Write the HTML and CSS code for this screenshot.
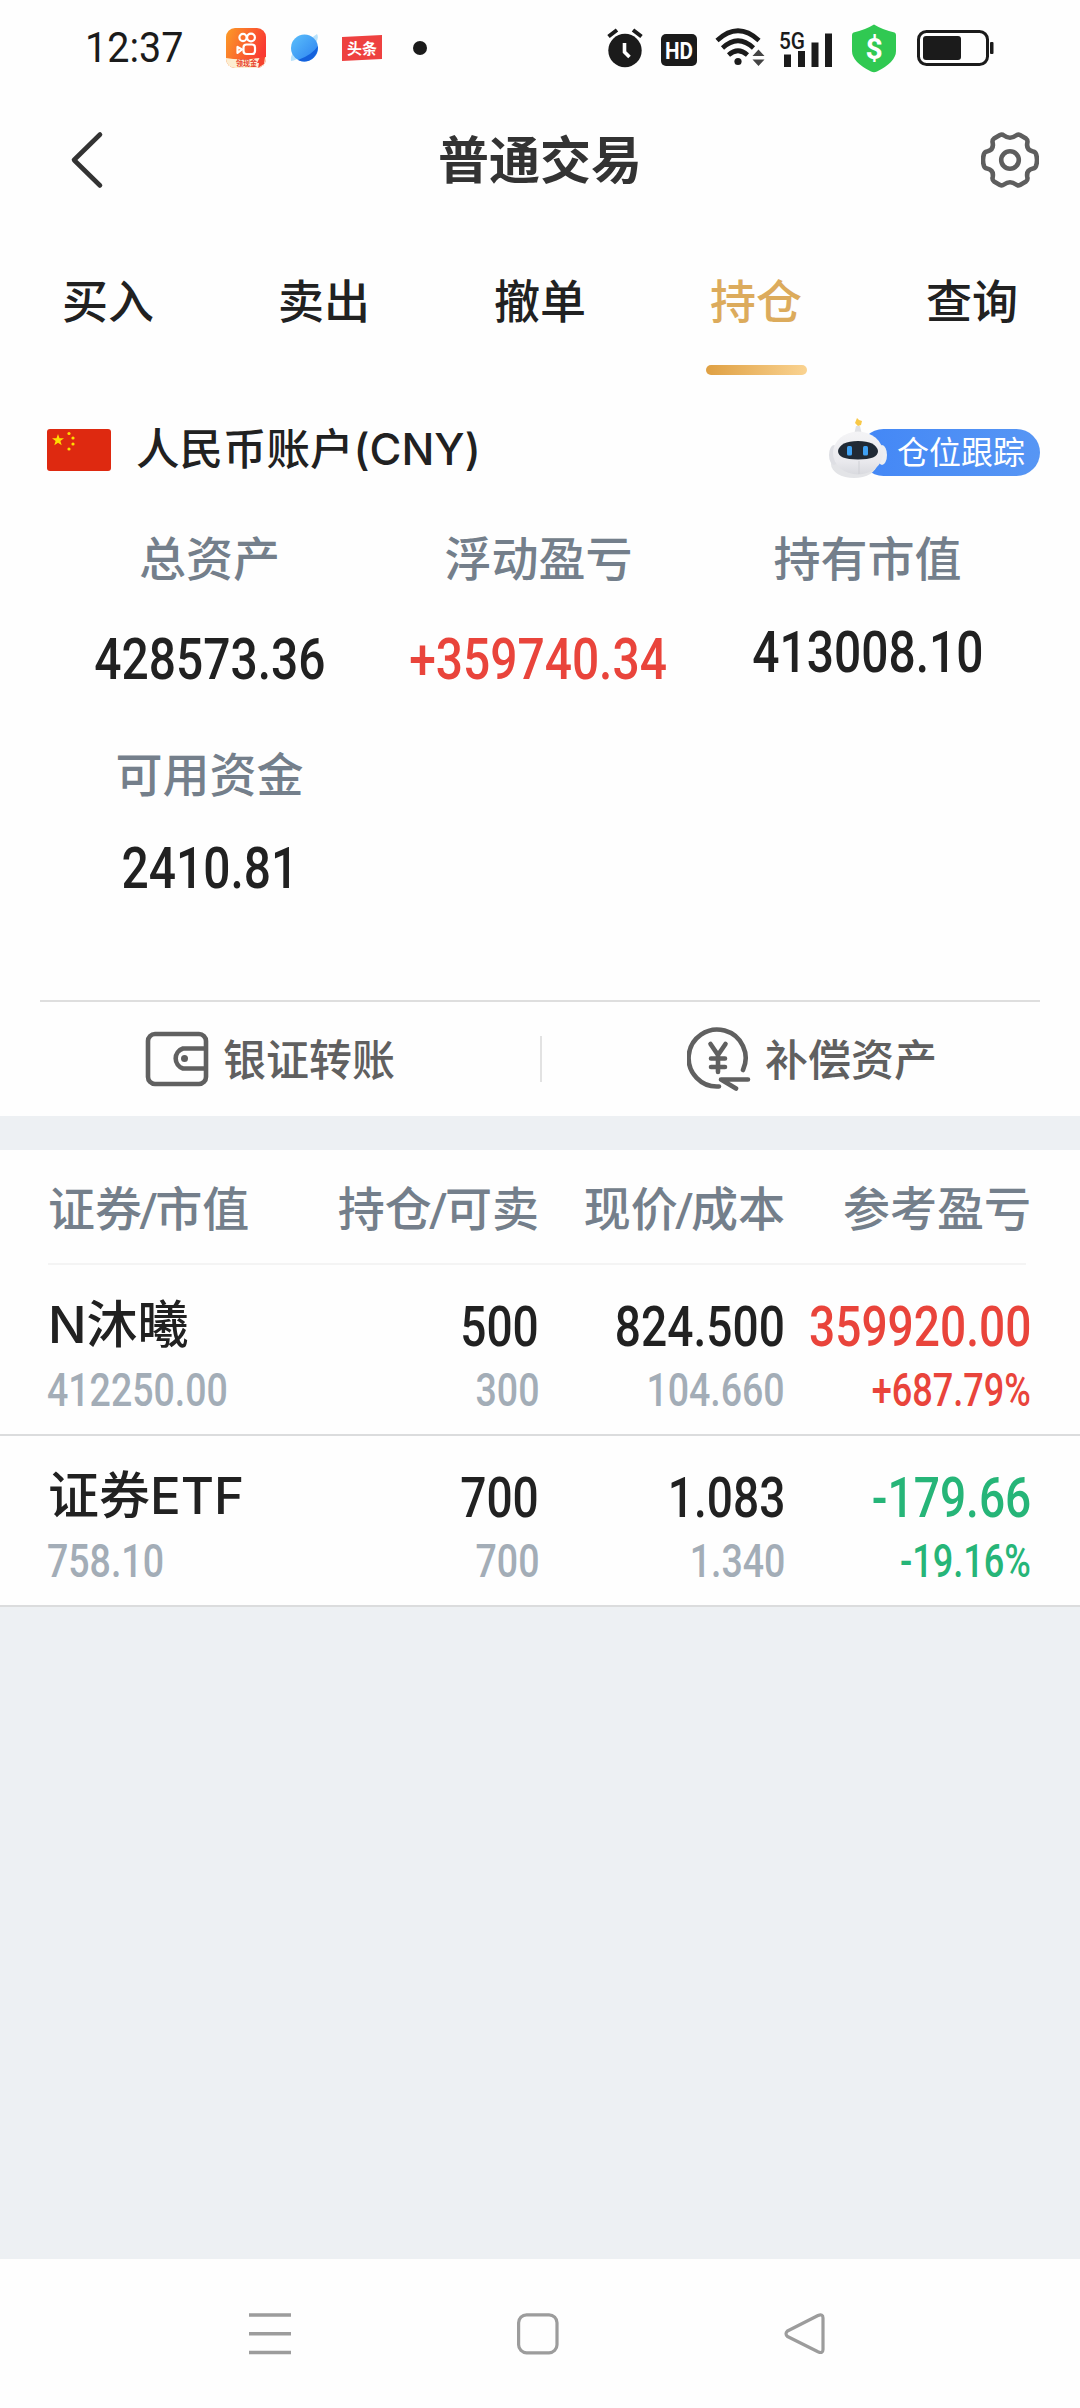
FILE: index.html
```html
<!DOCTYPE html>
<html lang="zh-CN">
<head>
<meta charset="utf-8">
<title>普通交易</title>
<link rel="stylesheet" href="styles.css">
</head>
<body>
<div class="screen">
  <div class="status">
    <span class="clock">12:37</span>
    <svg class="app-video" width="40" height="40" viewBox="0 0 40 40">
      <defs>
        <linearGradient id="gv" x1="0" y1="0" x2="1" y2="0.4"><stop offset="0" stop-color="#fb9c27"/><stop offset="1" stop-color="#fa3a32"/></linearGradient>
        <clipPath id="cv"><rect width="40" height="40" rx="9"/></clipPath>
      </defs>
      <g clip-path="url(#cv)">
        <rect width="40" height="40" fill="url(#gv)"/>
        <path d="M0 30Q16 33 40 29V40H0Z" fill="#fdeed2"/>
        <path d="M34 29l5 0-1 7-6 4 1-5-2 0Z" fill="#f5432f"/>
      </g>
      <g fill="none" stroke="#fff" stroke-width="2.2"><circle cx="17" cy="9.500" r="3.600"/><circle cx="25" cy="9.500" r="3.900"/><rect x="17.500" y="16.500" width="11.500" height="9.500" rx="3"/><path d="M16 21.500l-4.500-2.500v6Z" stroke-linejoin="round"/></g>
      <text x="10" y="38" textLength="21" lengthAdjust="spacingAndGlyphs" class="tiny">领现金</text>
    </svg>
    <svg class="app-globe" width="30" height="30" viewBox="0 0 30 30">
      <defs><linearGradient id="gg" x1="0" y1="0" x2="1" y2="1"><stop offset="0" stop-color="#5cc0fb"/><stop offset="1" stop-color="#2b80f0"/></linearGradient></defs>
      <path d="M27 1Q31 8 17 19Q6 28 1 28Q0 22 6 16Z" fill="#b9e2fb"/>
      <circle cx="14.500" cy="15" r="13.500" fill="url(#gg)"/>
      <path d="M28 13Q22 22 8 27Q16 31 23 25Q28 20 28 13Z" fill="#1461dc"/>
    </svg>
    <svg class="app-news" width="40" height="27" viewBox="0 0 40 27"><path d="M0 2L40 0V24L0 26Z" fill="#ee4140"/><text x="5" y="19" class="news-text">头条</text></svg>
    <svg class="more-dot" width="14" height="14"><circle cx="7" cy="7" r="7" fill="#1b1b1b"/></svg>
    <svg class="alarm" width="36" height="40" viewBox="0 0 36 40" fill="none"><circle cx="18" cy="22.500" r="16.700" fill="#1b1b1b"/><path d="M1.500 8.500L10 2M34.500 8.500L26 2" stroke="#1b1b1b" stroke-width="4"/><path d="M17.500 15v9l5 5" stroke="#fff" stroke-width="3.600"/></svg>
    <svg class="hd" width="36" height="32" viewBox="0 0 36 32"><rect width="36" height="32" rx="5" fill="#1b1b1b"/><text x="18" y="24.500" textLength="28" lengthAdjust="spacingAndGlyphs" text-anchor="middle" class="hd-text">HD</text></svg>
    <svg class="wifi" width="50" height="40" viewBox="0 0 50 40" fill="none" stroke="#1b1b1b" stroke-width="4.600"><path d="M2 13.500Q23 -6 44 13.500M7.500 21Q23 6.500 38.500 21M13.500 28Q23 19.500 32.500 28"/><circle cx="23" cy="34.500" r="3.600" fill="#1b1b1b" stroke="none"/><path d="M43.500 22.500l6 6.500H37.500ZM43.500 39l6-6.500H37.500Z" fill="#444" stroke="none"/></svg>
    <svg class="signal" width="54" height="46" viewBox="0 -6 54 46"><text x="0" y="19" textLength="26" lengthAdjust="spacingAndGlyphs" class="sig-text">5G</text><path d="M5 24.500h7v12.500H5ZM19 21h7v16H19ZM32.500 12.500h7v24.500h-7ZM46 3.500h7v33.500h-7Z" fill="#1b1b1b"/></svg>
    <svg class="shield" width="46" height="49" viewBox="0 0 46 49"><path d="M23 .5Q32 6 43.500 8.500Q45 9 45 11V27Q45 38 26 47.500Q23 49 20 47.500Q1 38 1 27V11Q1 9 2.500 8.500Q14 6 23 .5Z" fill="#30c952"/><text x="23" y="34.500" text-anchor="middle" class="dollar">$</text></svg>
    <svg class="battery" width="77" height="36" viewBox="0 0 77 36"><rect x="1.500" y="1.500" width="69" height="33" rx="8" fill="none" stroke="#1b1b1b" stroke-width="3"/><rect x="6" y="6" width="38" height="24" rx="3" fill="#1b1b1b"/><rect x="73" y="12" width="3.500" height="12" rx="1" fill="#1b1b1b"/></svg>
  </div>

  <div class="titlebar">
    <svg width="36" height="58" viewBox="0 0 36 58" fill="none" stroke="#333" stroke-width="4.600" stroke-linecap="round" stroke-linejoin="round"><path d="M31 3.500L5 29L31 54.500"/></svg>
    <h1>普通交易</h1>
    <svg width="58" height="58" viewBox="0 0 58 58" fill="none" stroke="#5e5e5e" stroke-width="4.600" stroke-linejoin="round"><path d="M19 4Q21 3 23 4.500Q29 9 35 4.500Q37 3 39 4L45 7.500Q47 9 46.300 12Q45 19 52 20.500Q54.500 21 55 23Q57 29 55 35Q54.500 37 52 37.500Q45 39 46.300 46Q47 49 45 50.500L39 54Q37 55 35 53.500Q29 49 23 53.500Q21 55 19 54L13 50.500Q11 49 11.700 46Q13 39 6 37.500Q3.500 37 3 35Q1 29 3 23Q3.500 21 6 20.500Q13 19 11.700 12Q11 9 13 7.500Z"/><circle cx="29" cy="29" r="8.800"/></svg>
  </div>

  <div class="tabs"><span>买入</span><span>卖出</span><span>撤单</span><span class="active">持仓</span><span>查询</span></div>

  <div class="account">
    <svg class="flag" width="64" height="42" viewBox="0 0 64 42"><rect width="64" height="42" rx="3" fill="#de2910"/><g fill="#ffde00"><path d="M11 5l1.500 4.200h4.500l-3.600 2.700 1.300 4.400-3.700-2.600-3.700 2.600 1.300-4.400L5 9.200h4.500Z"/><circle cx="22" cy="4.500" r="1.600"/><circle cx="26" cy="9" r="1.600"/><circle cx="26" cy="15" r="1.600"/><circle cx="22" cy="20" r="1.600"/></g></svg>
    <span class="account-name">人民币账户<span class="cny">(CNY)</span></span>
    <div class="badge">
      <svg class="robot" width="68" height="72" viewBox="0 0 68 72">
        <defs><linearGradient id="gr" x1="0" y1="0" x2="0" y2="1"><stop offset="0" stop-color="#f4f4f6"/><stop offset=".7" stop-color="#e9e9ed"/><stop offset="1" stop-color="#d9dadf"/></linearGradient></defs>
        <ellipse cx="29" cy="49" rx="23" ry="14" fill="#e3e4e7"/>
        <path d="M29 20l2-9h4l2 9Z" fill="#e0e1e5"/><path d="M32 3l2 2 3 1-1 4-3 1-3-3Z" fill="#f8c847"/>
        <ellipse cx="9" cy="40" rx="5" ry="10" fill="#dedfe4"/><ellipse cx="57" cy="40" rx="5" ry="10" fill="#eceef2"/>
        <ellipse cx="33" cy="38" rx="25" ry="21.500" fill="url(#gr)"/>
        <path d="M34 46V59" stroke="#cfd0d5" stroke-width="1"/>
        <path d="M13 36Q15 26 33 26Q51 26 53 36Q53 44.500 33 44.500Q13 44.500 13 36Z" fill="#202a35"/><rect x="22" y="31" width="5" height="9.500" rx="1.500" fill="#3fa2f4"/><rect x="38" y="31" width="5" height="9.500" rx="1.500" fill="#3fa2f4"/>
      </svg>
      <span>仓位跟踪</span>
    </div>
  </div>

  <div class="summary">
    <div class="metric"><label>总资产</label><b class="num">428573.36</b></div>
    <div class="metric"><label>浮动盈亏</label><b class="num up">+359740.34</b></div>
    <div class="metric raised"><label>持有市值</label><b class="num">413008.10</b></div>
    <div class="metric second"><label>可用资金</label><b class="num">2410.81</b></div>
  </div>

  <div class="actions">
    <div class="action left">
      <svg width="64" height="56" viewBox="0 0 64 56" fill="none" stroke="#606060" stroke-width="4.600"><rect x="3" y="3" width="58" height="50" rx="7"/><path d="M61 17.500H38a10.500 10.500 0 0 0 0 20H61"/><circle cx="39.500" cy="27.500" r="3.500" fill="#606060" stroke="none"/></svg>
      <span>银证转账</span>
    </div>
    <div class="action right">
      <svg width="64" height="64" viewBox="0 0 64 64" fill="none" stroke="#606060" stroke-width="4.600" stroke-linecap="round" stroke-linejoin="round"><path d="M32 59.500A28.500 28.500 0 1 1 56 43M61 52.500H34L49 61.500"/><path d="M23.500 17L31 28L38.500 17M31 28V45M24 31.500H38M24 40H38"/></svg>
      <span>补偿资产</span>
    </div>
  </div>

  <div class="gap"></div>

  <div class="holdings">
    <div class="row head"><span>证券<i>/</i>市值</span><span>持仓<i>/</i>可卖</span><span>现价<i>/</i>成本</span><span>参考盈亏</span></div>
    <div class="row item">
      <div class="cell name"><strong>N沐曦</strong><small class="num">412250.00</small></div>
      <div class="cell"><b class="num">500</b><small class="num">300</small></div>
      <div class="cell"><b class="num">824.500</b><small class="num">104.660</small></div>
      <div class="cell up"><b class="num">359920.00</b><small class="num pct">+687.79%</small></div>
    </div>
    <div class="row item">
      <div class="cell name"><strong>证券ETF</strong><small class="num">758.10</small></div>
      <div class="cell"><b class="num">700</b><small class="num">700</small></div>
      <div class="cell"><b class="num">1.083</b><small class="num">1.340</small></div>
      <div class="cell down"><b class="num">-179.66</b><small class="num pct">-19.16%</small></div>
    </div>
  </div>

  <div class="blank"></div>

  <div class="navbar">
    <svg width="42" height="42" viewBox="0 0 42 42" stroke="#9c9c9c" stroke-width="3.400"><path d="M0 2H42M0 20.700H42M0 39.500H42"/></svg>
    <svg width="42" height="42" viewBox="0 0 42 42" fill="none" stroke="#9c9c9c" stroke-width="3.200"><rect x="1.600" y="1.800" width="38.400" height="38" rx="8"/></svg>
    <svg width="42" height="42" viewBox="0 0 42 42" fill="none" stroke="#9c9c9c" stroke-width="3.200" stroke-linejoin="round"><path d="M3.500 18L34 2.500Q39 .5 39 5V36.500Q39 41 34 38.800L3.500 23.500Q.5 20.800 3.500 18Z"/></svg>
  </div>
</div>
</body>
</html>
```
FILE: styles.css
```css
* { box-sizing: border-box; }
body { margin: 0; background: #fefefe; font-family: Roboto, "Noto Sans CJK SC", sans-serif; color: #212121; }
svg { display: block; flex: none; }
.screen { width: 1080px; height: 2408px; display: flex; flex-direction: column; background: #fefefe; }

.status { height: 96px; display: flex; align-items: center; padding-left: 85px; color: #1b1b1b; }
.clock { width: 141px; font-size: 42px; line-height: 98px; transform: scaleX(.94); transform-origin: left; white-space: nowrap; }
.app-video { margin-right: 24px; }
.app-globe { margin-right: 22px; }
.app-news { margin-right: 31px; }
.more-dot { margin-right: 180px; }
.alarm { margin-right: 18px; }
.hd { margin-right: 18px; margin-top: 3px; }
.wifi { margin-right: 14px; margin-top: -2px; }
.signal { margin-right: 18px; margin-top: -3px; }
.shield { margin-right: 20px; }
.tiny { font: 700 7.500px "Noto Sans CJK SC", sans-serif; fill: #e8412c; }
.news-text { font: 700 15px "Noto Sans CJK SC", sans-serif; fill: #fff; }
.hd-text { font: 700 24px Roboto, sans-serif; fill: #fff; }
.sig-text { font: 500 24px Roboto, sans-serif; fill: #1b1b1b; }
.dollar { font: 700 30px Roboto, sans-serif; fill: #fff; }

.titlebar { height: 128px; display: flex; align-items: center; justify-content: space-between; padding: 0 41px 0 69px; }
h1 { margin: 4px 6px 0 0; font-size: 51px; font-weight: 700; line-height: 64px; color: #333; }

.tabs { height: 170px; display: grid; grid-template-columns: repeat(5, 216px); font-size: 46px; font-weight: 500; text-align: center; line-height: 68px; }
.tabs span { padding-top: 44px; display: flex; flex-direction: column; align-items: center; }
.tabs .active { color: #dcab5c; }
.tabs .active::after { content: ""; width: 101px; height: 10px; margin-top: 29px; border-radius: 5px; background: linear-gradient(90deg, #dfa043, #fad391); }

.account { height: 112px; display: flex; align-items: center; padding: 0 40px 0 47px; }
.account-name { margin-left: 25px; font-size: 43.500px; line-height: 64px; font-weight: 500; white-space: nowrap; }
.cny { font-family: Inter, sans-serif; letter-spacing: 0; }
.badge { position: relative; margin-left: auto; margin-top: 5px; width: 180px; height: 47px; padding-left: 37px; border-radius: 24px; background: linear-gradient(90deg, #4387f6, #5796f4); color: #fff; font-size: 32px; line-height: 49px; white-space: nowrap; }
.robot { position: absolute; left: -35px; top: -14px; }

.summary { height: 494px; display: grid; grid-template-columns: repeat(3, 329px); grid-template-rows: 216px 1fr; padding: 22px 0 0 45px; }
.metric { display: flex; flex-direction: column; align-items: center; }
.metric label { font-size: 47px; line-height: 64px; font-weight: 500; color: #747f8b; }
.num { display: block; font-weight: 500; white-space: nowrap; transform: scaleX(.826); }
.metric .num { font-size: 58px; line-height: 64px; margin-top: 35px; }
.raised .num { margin-top: 27px; }
.metric.raised .num, .metric.second .num { margin-top: 28px; }
.up, .metric .up { color: #e9443b; }
.down { color: #26b578; }

.actions { height: 116px; margin: 0 40px; border-top: 2px solid #dedede; display: flex; align-items: center; font-size: 43px; font-weight: 500; color: #606060; line-height: 60px; }
.action { width: 500px; display: flex; align-items: center; gap: 14px; height: 46px; }
.action span { padding-top: 3px; }
.left { padding-left: 105px; }
.right { padding-left: 145px; border-left: 2px solid #e2e2e2; }
.gap { height: 34px; background: #edf0f3; }

.row { display: grid; grid-template-columns: 210px 281px 246px 246px; padding-left: 48px; }
.row > :not(:first-child) { text-align: right; }
.head { height: 115px; border-bottom: 2px solid #f4f4f4; margin: 0 54px 0 48px; padding: 28px 0 0; font-size: 47px; font-weight: 500; line-height: 64px; color: #747f8b; white-space: nowrap; }
.head i { font-style: normal; margin: 0 -2.500px; }
.item { height: 171px; border-bottom: 2px solid #dbdcdd; }
.cell { display: flex; flex-direction: column; align-items: flex-end; }
.name { align-items: flex-start; }
.item strong { margin-top: 26px; height: 72px; line-height: 68px; font-family: Inter, "Noto Sans CJK SC", sans-serif; font-size: 51px; font-weight: 500; white-space: nowrap; }
.item b { height: 68px; margin-top: 30px; line-height: 64px; font-size: 55px; transform: scaleX(.838); transform-origin: right; }
.item small { height: 54px; line-height: 54px; font-size: 46px; font-weight: 500; color: #a3adb7; transform: scaleX(.815); transform-origin: right; }
.item .name small { margin-left: -1px; transform-origin: left; }
.item .up small, .item .down small { color: inherit; }
.item .pct { transform: scaleX(.785); }

.blank { flex: 1; background: #edf0f3; }
.navbar { height: 149px; display: flex; justify-content: space-between; padding: 54px 254px 0 249px; }
```
